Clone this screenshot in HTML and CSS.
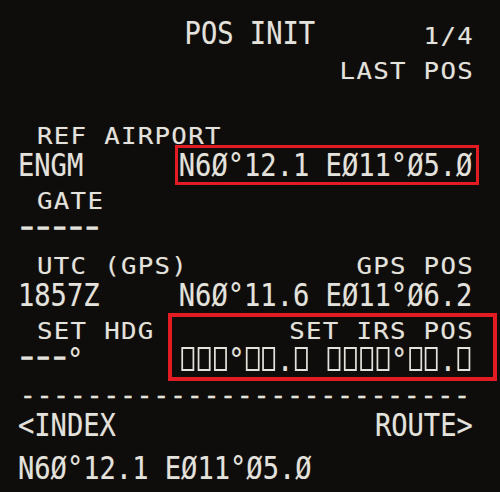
FILE: index.html
```html
<!DOCTYPE html>
<html lang="en">
<head>
<meta charset="utf-8">
<title>POS INIT</title>
<link rel="stylesheet" href="styles.css">
</head>
<body>
<div class="screen">
  <div class="ln title-ln">
    <span></span>
    <span class="t title">POS INIT</span>
    <span class="s R">1/4</span>
  </div>
  <div class="ln sm"><span class="s R">LAST POS</span></div>
  <div class="ln lg"></div>
  <div class="ln sm"><span class="s L lbl">REF AIRPORT</span></div>
  <div class="ln lg"><span class="t L">ENGM</span><span class="t R">N6Ø°12.1 EØ11°Ø5.Ø</span></div>
  <div class="ln sm"><span class="s L lbl">GATE</span></div>
  <div class="ln lg"><span class="t L"><span class="dash d5">-----</span></span></div>
  <div class="ln sm"><span class="s L lbl">UTC (GPS)</span><span class="s R">GPS POS</span></div>
  <div class="ln lg"><span class="t L">1857Z</span><span class="t R">N6Ø°11.6 EØ11°Ø6.2</span></div>
  <div class="ln sm"><span class="s L lbl">SET HDG</span><span class="s R">SET IRS POS</span></div>
  <div class="ln lg"><span class="t L"><span class="dash d3">---</span>°</span><span class="t R"><span class="bx"></span><span class="bx"></span><span class="bx"></span>°<span class="bx"></span><span class="bx"></span>.<span class="bx"></span> <span class="bx"></span><span class="bx"></span><span class="bx"></span><span class="bx"></span>°<span class="bx"></span><span class="bx"></span>.<span class="bx"></span></span></div>
  <div class="ln sm"><span class="rule">---------------------------</span></div>
  <div class="ln lg"><span class="t L">&lt;INDEX</span><span class="t R">ROUTE&gt;</span></div>
  <div class="ln lg scratch"><span class="t L">N6Ø°12.1 EØ11°Ø5.Ø</span></div>

  <div class="hl hl1"></div>
  <div class="hl hl2"></div>
</div>
</body>
</html>
```

FILE: styles.css
```css
html, body {
  margin: 0;
  background: #0f0d0b;
}

.screen {
  position: relative;
  width: 500px;
  height: 492px;
  box-sizing: border-box;
  padding: 16.45px 27.4px 0 17.5px;
  font-family: "DejaVu Sans Mono", monospace;
  color: #e4e2dc;
  text-shadow: 0 0 1px rgba(255, 255, 255, 0.25);
  overflow: hidden;
}

.ln {
  display: flex;
  justify-content: space-between;
  white-space: pre;
  height: 32.5px;
}

.lg {
  font-size: 31.5px;
  line-height: 32.5px;
}

.sm {
  font-size: 23px;
  line-height: 38.4px;
}

.title-ln {
  display: grid;
  grid-template-columns: 1fr auto 1fr;
  height: 35.3px;
  font-size: 31.5px;
  line-height: 35.3px;
}

.title-ln .s {
  line-height: 41.2px;
  justify-self: end;
}

.title {
  margin-left: 9px;
}

.t {
  transform: scaleX(0.86);
  transform-origin: center center;
}

.s {
  font-size: 23px;
  letter-spacing: 1.15px;
  transform: scaleX(1.12);
  transform-origin: center center;
}

.L {
  transform-origin: left center;
}

.R {
  transform-origin: right center;
  margin-left: auto;
}

.s.R {
  margin-right: -1.15px;
}

.lbl {
  margin-left: 19px;
}

/* large-font dashes: wide, raised, heavy strokes */
.dash {
  display: inline-block;
  font-size: 22px;
  line-height: 14px;
  letter-spacing: -3.16px;
  transform: scaleX(1.88);
  transform-origin: left center;
  vertical-align: 7.1px;
  -webkit-text-stroke: 1.4px currentColor;
  margin-left: -2px;
}

.d3 { width: 58.9px; }
.d5 { width: 96.8px; }

/* separator row */
.rule {
  font-size: 25px;
  letter-spacing: 1.65px;
  -webkit-text-stroke: 0.6px currentColor;
  margin-left: 2.7px;
}

.bx {
  display: inline-block;
  width: 15.1px;
  height: 24px;
  box-sizing: border-box;
  border: 2px solid currentColor;
  margin: 0 1.9px;
  vertical-align: baseline;
}

.scratch {
  margin-top: 10px;
}

.hl {
  position: absolute;
  box-sizing: border-box;
  border-style: solid;
  border-color: #e31b23;
}

.hl1 {
  left: 175px;
  top: 145px;
  width: 304px;
  height: 40px;
  border-width: 3px;
}

.hl2 {
  left: 168px;
  top: 313px;
  width: 329px;
  height: 68px;
  border-width: 4px;
}
```
